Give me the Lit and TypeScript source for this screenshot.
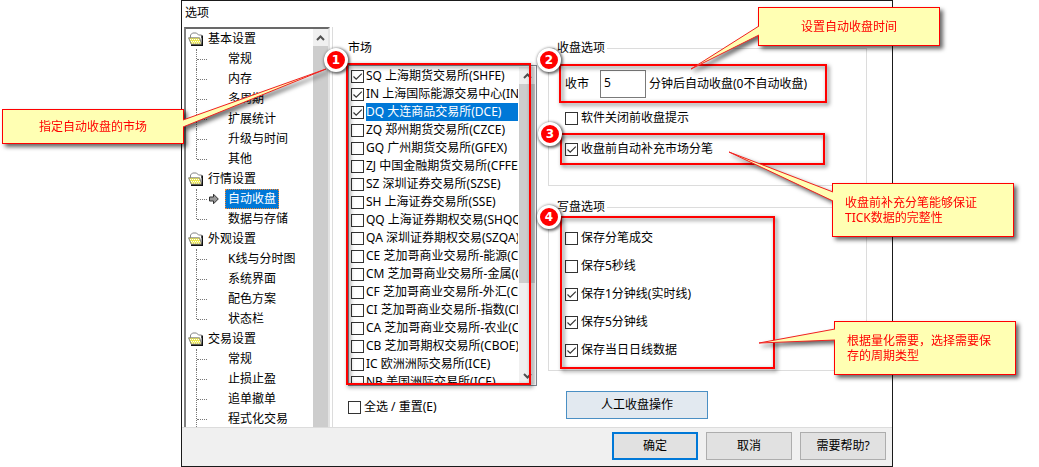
import { LitElement, html, svg, css } from "lit";
import { customElement, property, state } from "lit/decorators.js";
import { classMap } from "lit/directives/class-map.js";

const controls = css`
  * { box-sizing: border-box; }
  label { display: flex; align-items: center; }
  input[type="checkbox"] {
    appearance: none;
    flex: none;
    width: 13px;
    height: 13px;
    margin: 0;
    border: 1px solid #333;
    background: #fff;
  }
  input[type="checkbox"]:checked {
    background: #fff url("data:image/svg+xml,%3Csvg xmlns='http://www.w3.org/2000/svg' viewBox='0 0 11 11'%3E%3Cpath d='M1.5 5.5 4.2 8.2 9.8 2.6' fill='none' stroke='%23333' stroke-width='1.2'/%3E%3C/svg%3E") center / 11px 11px no-repeat;
  }
  .arrow { display: block; width: 9px; height: 6px; fill: none; stroke: #505050; stroke-width: 2; }
`;

const arrowUp = html`<svg class="arrow" viewBox="0 0 9 6"><path d="M1 5 4.5 1.5 8 5" /></svg>`;
const arrowDown = html`<svg class="arrow" viewBox="0 0 9 6"><path d="M1 1 4.5 4.5 8 1" /></svg>`;

interface Group { name: string; items: string[]; }

const GROUPS: Group[] = [
  { name: "基本设置", items: ["常规", "内存", "多周期", "扩展统计", "升级与时间", "其他"] },
  { name: "行情设置", items: ["自动收盘", "数据与存储"] },
  { name: "外观设置", items: ["K线与分时图", "系统界面", "配色方案", "状态栏"] },
  { name: "交易设置", items: ["常规", "止损止盈", "追单撤单", "程式化交易"] },
];

@customElement("settings-tree")
class SettingsTree extends LitElement {
  @state() private selected = "自动收盘";

  static styles = [controls, css`
    :host { display: flex; height: 400px; overflow: hidden; background: #fff;
      border-style: solid; border-width: 2px 2px 0; border-color: #696969 #e3e3e3 #fff #808080; }
    .groups { flex: 1; min-width: 0; }
    ul { list-style: none; margin: 0; padding: 0; }
    .group { display: flex; align-items: center; height: 20px; padding-left: 2px; gap: 4px; }
    .folder { width: 16px; height: 14px; }
    .items { padding-left: 10px; }
    .item { display: grid; grid-template-columns: 10px 18px auto; align-items: center; justify-content: start; height: 20px; position: relative; border-left: 1px dotted #777; }
    .item:last-child { border-left-color: transparent; }
    .item:last-child::before { content: ""; position: absolute; left: -1px; top: 0; height: 10px; border-left: 1px dotted #777; }
    .last .item:last-child { border-left-color: #777; }
    .stub { border-top: 1px dotted #777; height: 0; }
    .mark { width: 10px; height: 12px; margin-left: 2px; }
    a { color: #000; text-decoration: none; line-height: 18px; padding: 0 2px; border: 1px solid transparent; white-space: nowrap; }
    a.on { background: #0078d7; color: #fff; border: 1px dotted #ff8728; }
    .bar { flex: none; width: 15px; background: #cdcdcd; }
    .btn { display: grid; place-items: center; height: 17px; background: #f0f0f0; }
  `];

  render() {
    return html`
      <ul class="groups">
        ${GROUPS.map((g, i) => html`<li>
          <div class="group">
            <svg class="folder" viewBox="0 0 16 14">
              <path d="M2.5 6V3L4.5 1h4l2 2h3v3" fill="#fff" stroke="#858585" />
              <path d="M.6 5.8h11l2 6.4H3.2Z" fill="#eeea50" stroke="#858585" />
              <path d="M2 7.5h9M3 9.5h9M4 11h8.5" stroke="#fff" stroke-dasharray="1 1" />
              <path d="M14.3 3.5v9.7H3" fill="none" stroke="#111" stroke-width="1.4" />
            </svg>
            <span>${g.name}</span>
          </div>
          <ul class=${classMap({ items: true, last: i === GROUPS.length - 1 })}>
            ${g.items.map((t) => html`<li class="item">
              <span class="stub"></span>
              ${t === this.selected
                ? html`<svg class="mark" viewBox="0 0 10 12"><path d="M.5 4h4V1.2L9.3 6 4.5 10.8V8h-4Z" fill="#999" stroke="#333" /></svg>`
                : html`<span></span>`}
              <a href="#" class=${classMap({ on: t === this.selected })}
                @click=${(e: Event) => { e.preventDefault(); this.selected = t; }}>${t}</a>
            </li>`)}
          </ul>
        </li>`)}
      </ul>
      <div class="bar"><div class="btn">${arrowUp}</div></div>`;
  }
}

const MARKETS = [
  "SQ 上海期货交易所(SHFE)", "IN 上海国际能源交易中心(INE)", "DQ 大连商品交易所(DCE)",
  "ZQ 郑州期货交易所(CZCE)", "GQ 广州期货交易所(GFEX)", "ZJ 中国金融期货交易所(CFFEX)",
  "SZ 深圳证券交易所(SZSE)", "SH 上海证券交易所(SSE)", "QQ 上海证券期权交易(SHQQ)",
  "QA 深圳证券期权交易(SZQA)", "CE 芝加哥商业交易所-能源(CME)", "CM 芝加哥商业交易所-金属(CME)",
  "CF 芝加哥商业交易所-外汇(CME)", "CI 芝加哥商业交易所-指数(CME)", "CA 芝加哥商业交易所-农业(CME)",
  "CB 芝加哥期权交易所(CBOE)", "IC 欧洲洲际交易所(ICE)", "NB 美国洲际交易所(ICE)",
];

@customElement("market-list")
class MarketList extends LitElement {
  @state() private current = 2;

  static styles = [controls, css`
    :host { display: flex; height: 321px; padding: 1px; border: 1px solid #828790; background: #fff; }
    .rows { flex: 1; min-width: 0; overflow: hidden; padding: 0 1px; }
    label { height: 18px; gap: 2px; white-space: nowrap; }
    .name { flex: 1; min-width: 0; overflow: hidden; line-height: 18px; }
    .on .name { background: #0078d7; color: #fff; }
    .bar { flex: none; display: flex; flex-direction: column; width: 16px; background: #f0f0f0; }
    .btn { display: grid; place-items: center; height: 17px; }
    .thumb { height: 199px; background: #cdcdcd; }
    .bar .btn:last-child { margin-top: auto; }
  `];

  render() {
    return html`
      <div class="rows">
        ${MARKETS.map((m, i) => html`<label class=${classMap({ on: i === this.current })} @click=${() => (this.current = i)}>
          <input type="checkbox" .checked=${i < 3} /><span class="name">${m}</span>
        </label>`)}
      </div>
      <div class="bar"><div class="btn">${arrowUp}</div><div class="thumb"></div><div class="btn">${arrowDown}</div></div>`;
  }
}

@customElement("call-out")
class CallOut extends LitElement {
  @property() tail = "";
  @property({ type: Boolean }) centered = false;

  static styles = css`
    :host { position: absolute; display: block; width: 182px; filter: drop-shadow(3px 3px 2px rgba(0, 0, 0, 0.6)); }
    .box { box-sizing: border-box; height: 100%; display: flex; align-items: center; padding: 0 12px; border: 1px solid #f00; background: #ffffb3; color: #f00; line-height: 15px; }
    .centered { justify-content: center; }
    svg { position: absolute; left: 0; top: 0; width: 1px; height: 1px; overflow: visible; }
    .tail { fill: #ffffb3; stroke: #f02020; stroke-width: 1; }
  `;

  render() {
    return html`
      <div class=${classMap({ box: true, centered: this.centered })}><slot></slot></div>
      <svg>${svg`<polyline class="tail" points=${this.tail} />`}</svg>`;
  }
}

@customElement("app-root")
class AppRoot extends LitElement {
  static styles = [controls, css`
    :host { display: block; position: relative; background: #fff; color: #000;
      font: 12px/18px "Noto Sans", "Noto Sans CJK SC", sans-serif; }
    .dialog { margin: 0 146px 0 181px; border: 1px solid #1a1a1a; background: #fff; }
    .title { margin: 0; padding: 3px 3px 5px; font-size: 12px; font-weight: 400; line-height: 18px; }
    .body { display: flex; gap: 2px; padding-left: 2px; }
    settings-tree { flex: none; width: 146px; }
    .page { flex: 1; min-width: 0; display: flex; gap: 11px; padding: 12px 25px 0 15px; border-left: 1px solid #dcdcdc; }
    .market { flex: none; width: 189px; }
    .market h2 { margin: 0 0 8px; font-size: 12px; font-weight: 400; }
    .all { margin-top: 12px; gap: 3px; }
    .options { flex: 1; min-width: 0; }
    fieldset { min-width: 0; margin: 0 0 12px; padding: 13px 16px 27px; border: 1px solid #dcdcdc; }
    legend { margin-left: -10px; padding: 0 2px; }
    .write { margin: 0; padding: 8px 16px 6px; }
    .opt { gap: 3px; margin-top: 11px; }
    .opt + .opt { margin-top: 13px; }
    .write .opt { margin: 0; height: 28px; }
    .close { display: flex; align-items: center; }
    .minutes { width: 46px; height: 28px; margin: 0 3px 0 11px; padding: 0 3px 4px; border: 1px solid #7a7a7a; background: #fff; font: inherit; color: inherit; }
    button { height: 28px; padding: 0; border: 1px solid #adadad; background: #e1e1e1; font: inherit; color: #000; }
    .manual { display: block; width: 142px; margin: 20px 0 0 18px; border-color: #4a8fc4; background: #e2e9f0; }
    footer { display: flex; justify-content: flex-end; gap: 8px; padding: 4px 6px 6px; border-top: 1px solid #dcdcdc; background: #f0f0f0; }
    footer button { width: 86px; }
    footer .primary { border: 2px solid #0078d7; }
    .frame { position: absolute; border: 2px solid #f00; pointer-events: none; filter: drop-shadow(2px 2px 2px rgba(0, 0, 0, 0.6)); }
    .f1 { left: 346px; top: 63px; width: 185px; height: 322px; }
    .f2 { left: 559px; top: 64px; width: 268px; height: 39px; }
    .f3 { left: 560px; top: 133px; width: 265px; height: 32px; }
    .f4 { left: 560px; top: 216px; width: 215px; height: 153px; }
    .c1 { left: 2px; top: 109px; height: 35px; }
    .c2 { left: 758px; top: 7px; height: 39px; }
    .c3 { left: 832px; top: 183px; height: 54px; }
    .c4 { left: 834px; top: 321px; height: 54px; }
    .badge { position: absolute; display: grid; place-items: center; width: 24px; height: 24px; border: 3px solid #fff; border-radius: 50%; background: #f00; color: #fff; font: bold 12px/18px "DejaVu Sans", sans-serif; box-shadow: 1px 1px 3px 1px rgba(0, 0, 0, 0.6); }
    .b1 { left: 324px; top: 48px; }
    .b2 { left: 537px; top: 48px; }
    .b3 { left: 538px; top: 122px; }
    .b4 { left: 537px; top: 205px; }
  `];

  private option(text: string, checked: boolean, cls = "opt") {
    return html`<label class=${cls}><input type="checkbox" ?checked=${checked} /><span>${text}</span></label>`;
  }

  render() {
    return html`
      <main class="dialog">
        <h1 class="title">选项</h1>
        <div class="body">
          <settings-tree></settings-tree>
          <div class="page">
            <section class="market">
              <h2>市场</h2>
              <market-list></market-list>
              ${this.option("全选 / 重置(E)", false, "all")}
            </section>
            <section class="options">
              <fieldset>
                <legend>收盘选项</legend>
                <div class="close">
                  <label for="minutes">收市</label>
                  <input id="minutes" class="minutes" type="text" value="5" />
                  <span>分钟后自动收盘(0不自动收盘)</span>
                </div>
                ${this.option("软件关闭前收盘提示", false)}
                ${this.option("收盘前自动补充市场分笔", true)}
              </fieldset>
              <fieldset class="write">
                <legend>写盘选项</legend>
                ${this.option("保存分笔成交", false)}
                ${this.option("保存5秒线", false)}
                ${this.option("保存1分钟线(实时线)", true)}
                ${this.option("保存5分钟线", true)}
                ${this.option("保存当日日线数据", true)}
              </fieldset>
              <button class="manual">人工收盘操作</button>
            </section>
          </div>
        </div>
        <footer>
          <button class="primary">确定</button>
          <button>取消</button>
          <button>需要帮助?</button>
        </footer>
      </main>
      ${[1, 2, 3, 4].map((n) => html`<div class="frame f${n}"></div>`)}
      <call-out class="c1" centered tail="181,11 324,-40 181,18">指定自动收盘的市场</call-out>
      <call-out class="c2" centered tail="1,19 -67,62 1,28">设置自动收盘时间</call-out>
      <call-out class="c3" tail="1,9 -103,-31 1,18">收盘前补充分笔能够保证<br />TICK数据的完整性</call-out>
      <call-out class="c4" tail="1,8 -75,22 1,19">根据量化需要，选择需要保<br />存的周期类型</call-out>
      ${[1, 2, 3, 4].map((n) => html`<span class="badge b${n}">${n}</span>`)}`;
  }
}
